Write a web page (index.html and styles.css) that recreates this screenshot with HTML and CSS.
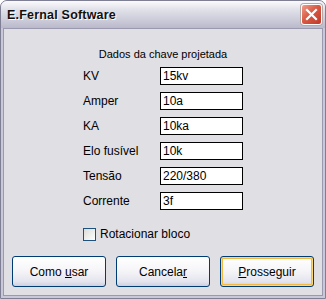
FILE: index.html
```html
<!DOCTYPE html>
<html lang="pt">
<head>
    <meta charset="UTF-8">
    <title>E.Fernal Software</title>
    <link rel="stylesheet" href="styles.css">
</head>
<body>
    <div class="window">
        <div class="titlebar">
            <span class="title">E.Fernal Software</span>
            <div class="close">
                <svg width="13" height="13" viewBox="0 0 13 13">
                    <path d="M2 2 L11 11 M11 2 L2 11" stroke="#fff" stroke-width="2.2" stroke-linecap="square"/>
                </svg>
            </div>
        </div>

        <div class="dialog">
            <div class="caption">Dados da chave projetada</div>

            <div class="form">
                <label>KV</label><div class="field">15kv</div>
                <label>Amper</label><div class="field">10a</div>
                <label>KA</label><div class="field">10ka</div>
                <label>Elo fusível</label><div class="field">10k</div>
                <label>Tensão</label><div class="field">220/380</div>
                <label>Corrente</label><div class="field">3f</div>
            </div>

            <div class="check-row">
                <span class="checkbox"></span>
                <span>Rotacionar bloco</span>
            </div>

            <div class="buttons">
                <button class="btn">Como <u>u</u>sar</button>
                <button class="btn">Cancela<u>r</u></button>
                <button class="btn default"><u>P</u>rosseguir</button>
            </div>
        </div>
    </div>
</body>
</html>
```

FILE: styles.css
```css
body {
    margin: 0;
    background: #ffffff;
    font-family: 'Liberation Sans', Arial, sans-serif;
    font-size: 11px;
    color: #000;
}
.window {
    width: 326px;
    height: 299px;
    box-sizing: border-box;
    border: 1px solid #7e7e94;
    border-radius: 7px 7px 0 0;
    padding: 0 2px 2px 2px;
    background: #c9c8d8;
    display: flex;
    flex-direction: column;
}
.titlebar {
    height: 27px;
    margin: 0 -2px;
    padding: 0 3px 0 6px;
    border-radius: 6px 6px 0 0;
    background: linear-gradient(#fbfbfd 0%, #e2e2ea 30%, #cfcfdc 65%, #b9b9cb 100%);
    display: flex;
    align-items: center;
    justify-content: space-between;
}
.title {
    font-weight: bold;
    font-size: 12.5px;
    color: #111;
    text-shadow: 1px 1px 0 #ffffff;
    letter-spacing: 0.2px;
}
.close {
    width: 19px;
    height: 19px;
    border: 1px solid #ffffff;
    border-radius: 3px;
    background: linear-gradient(135deg, #ef9e8c 0%, #d95a45 45%, #c0392b 100%);
    box-shadow: 0 0 0 1px #b7a8a8;
    display: flex;
    align-items: center;
    justify-content: center;
}
.dialog {
    flex: 1;
    border: 1px solid #9a99b0;
    background: #e0dfe3;
    display: flex;
    flex-direction: column;
    align-items: center;
    padding-top: 19px;
}
.caption {
    line-height: 13px;
    margin-bottom: 6px;
}
.form {
    display: grid;
    grid-template-columns: 77px 83px;
    grid-auto-rows: 18px;
    row-gap: 7px;
    align-items: center;
}
.field {
    height: 18px;
    box-sizing: border-box;
    border: 1px solid #000;
    background: #fff;
    padding: 0 2px;
    line-height: 16px;
    font-size: 12px;
}
label {
    font-size: 12px;
}
.check-row {
    width: 160px;
    margin-top: 18px;
    display: flex;
    align-items: center;
    gap: 4px;
    font-size: 12px;
    line-height: 13px;
}
.checkbox {
    width: 11px;
    height: 11px;
    border: 1px solid #1c5180;
    background: linear-gradient(135deg, #dcdcd7 0%, #f4f4f2 70%, #ffffff 100%);
}
.buttons {
    align-self: stretch;
    display: flex;
    gap: 10px;
    padding: 0 8px;
    margin-top: 15px;
}
.btn {
    flex: 1;
    height: 31px;
    border: 1px solid #003c74;
    border-radius: 3px;
    background: linear-gradient(#ffffff 0%, #f6f6f9 45%, #e4e4ee 85%, #cfcfe0 100%);
    font-family: 'Liberation Sans', Arial, sans-serif;
    font-size: 12px;
    color: #000;
    padding: 0;
}
.btn.default {
    box-shadow: inset 0 0 0 1px #fbd872, inset 0 0 0 2px #f4b942;
}
```
